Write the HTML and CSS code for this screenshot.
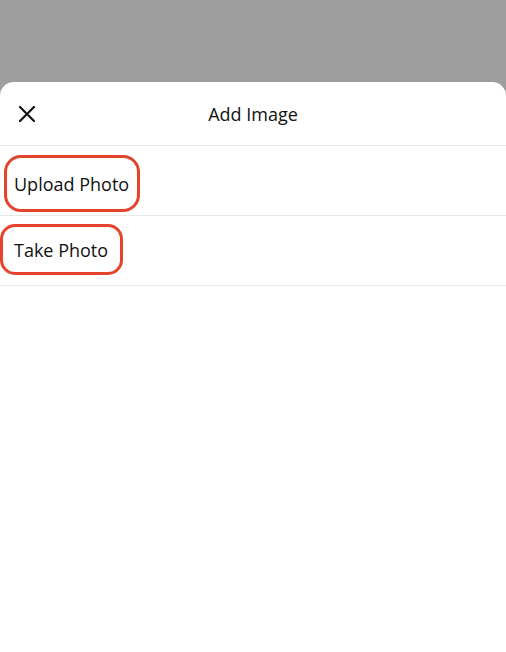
FILE: index.html
```html
<!DOCTYPE html>
<html lang="en">
<head>
  <meta charset="UTF-8">
  <meta name="viewport" content="width=device-width, initial-scale=1.0">
  <title>Add Image</title>
  <link rel="stylesheet" href="styles.css">
</head>
<body>
  <div class="backdrop"></div>
  <div class="sheet">
    <div class="sheet-header">
      <button class="close-btn" aria-label="Close">
        <svg width="18" height="18" viewBox="0 0 18 18">
          <path d="M2 2L16 16M16 2L2 16" stroke="#111" stroke-width="2.2" stroke-linecap="round"/>
        </svg>
      </button>
      <p class="sheet-title">Add Image</p>
    </div>
    <div class="option-row upload-row">
      <span class="option-label">Upload Photo</span>
    </div>
    <div class="option-row take-row">
      <span class="option-label">Take Photo</span>
    </div>
  </div>
</body>
</html>
```

FILE: styles.css
```css
*{
  box-sizing: border-box;
}

body{
  margin: 0;
  background-color: #9e9e9e;
  font-family: 'Open Sans', 'Noto Sans', sans-serif;
  color: #111;
}

.backdrop{
  height: 82px;
}

.sheet{
  background-color: white;
  border-radius: 14px 14px 0 0;
  height: 570px;
}

.sheet-header{
  position: relative;
  height: 64px;
  display: flex;
  align-items: center;
  justify-content: center;
  border-bottom: 1px solid #e8e8e8;
}
.close-btn{
  position: absolute;
  left: 18px;
  top: 23px;
  padding: 0;
  border: none;
  background: transparent;
  display: flex;
  cursor: pointer;
}
.sheet-title{
  margin: 0;
  font-size: 18px;
  font-weight: 500;
}

.option-row{
  height: 70px;
  display: flex;
  align-items: flex-start;
  border-bottom: 1px solid #e8e8e8;
}
.option-label{
  display: inline-flex;
  align-items: center;
  border: 3px solid #e5432c;
  font-size: 18px;
  font-weight: 500;
}

.upload-row{
  padding-top: 9px;
}
.upload-row .option-label{
  margin-left: 4px;
  height: 57px;
  padding: 0 8px 0 7px;
  border-radius: 17px;
}

.take-row{
  padding-top: 8px;
}
.take-row .option-label{
  height: 51px;
  padding: 0 12px 0 11px;
  border-radius: 15px;
}
```
